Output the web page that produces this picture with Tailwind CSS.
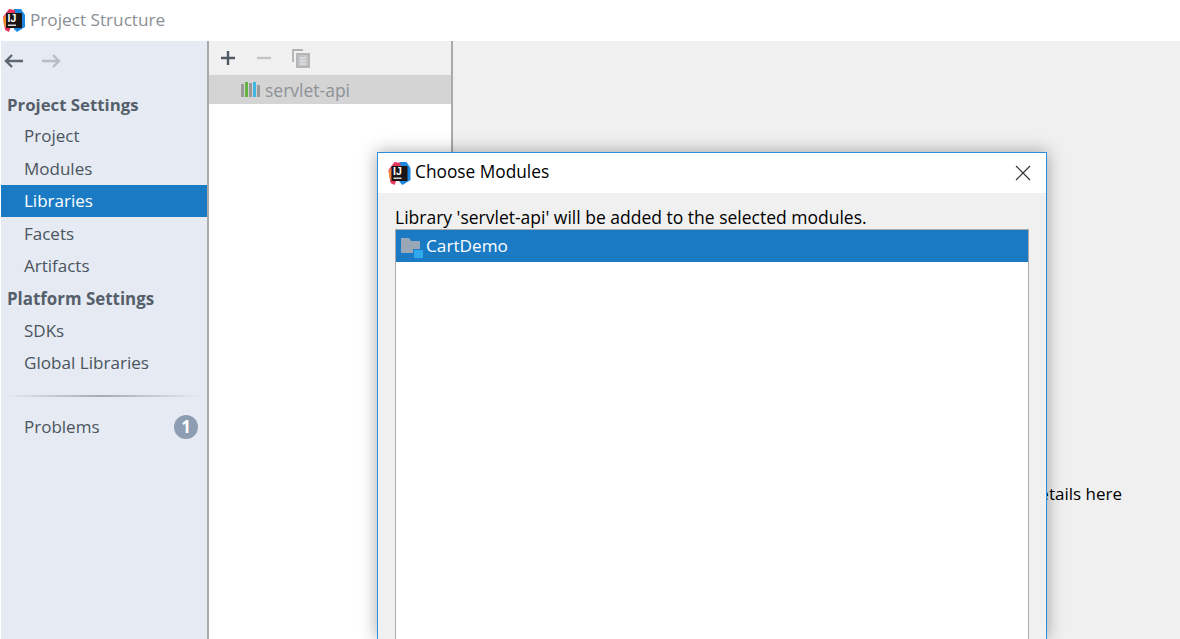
<!DOCTYPE html>
<html lang="en">
<head>
    <meta charset="UTF-8" />
    <title>Project Structure</title>
    <script src="https://cdn.jsdelivr.net/npm/@tailwindcss/browser@4"></script>
</head>
<body class="w-[1180px] h-[639px] overflow-hidden relative bg-white font-['Open_Sans','Noto_Sans',sans-serif] text-[17px]">
    <!-- title bar -->
    <div class="h-[41px] flex items-center pl-[3px] gap-[5px] bg-white">
        <svg width="22" height="23" viewBox="0 0 22 23">
            <path d="M11 0 L18 0 L22 6 L22 18 L14 23 L11 20 Z" fill="#1b87e0" />
            <path d="M0 8 L6 0 L12 1 L12 8 L6 23 L2 21 Z" fill="#e8375f" />
            <path d="M0 9 L3 6 L3 19 L1 16 Z" fill="#f58a2c" />
            <rect x="3" y="4" width="16" height="15" fill="#1a1414" />
            <text x="4.5" y="12.5" font-size="10.5" font-weight="700" fill="#fff" font-family="Liberation Sans">IJ</text>
            <rect x="5" y="15.5" width="8" height="1.5" fill="#d8d8d8" />
        </svg>
        <span class="text-[#8a8f96] text-[17.2px] -mt-[2px]">Project Structure</span>
    </div>

    <div class="flex h-[598px]">
        <!-- sidebar -->
        <div class="w-[209px] shrink-0 bg-[#e6eaf2] border-l border-white border-r-2 border-r-[#a9a9a9] text-[#4a5560]">
            <div class="h-[40px] flex items-center pl-[3px] gap-[17px]">
                <svg width="20" height="14" viewBox="0 0 20 14" fill="none" stroke="#5f6770" stroke-width="2.4"><path d="M19 7H2M8 1L2 7l6 6" /></svg>
                <svg width="20" height="14" viewBox="0 0 20 14" fill="none" stroke="#b9bcc0" stroke-width="2.4"><path d="M1 7h17M12 1l6 6-6 6" /></svg>
            </div>
            <div class="h-[39px] pt-[11px] pl-[6px] font-bold text-[#555f6b] leading-[26px] text-[16.8px]">Project Settings</div>
            <div class="h-[32px] flex items-center pl-[23px]">Project</div>
            <div class="h-[33px] flex items-center pl-[23px]">Modules</div>
            <div class="h-[32px] flex items-center pl-[23px] bg-[#1a7bc4] text-white">Libraries</div>
            <div class="h-[33px] flex items-center pl-[23px]">Facets</div>
            <div class="h-[32px] flex items-center pl-[23px]">Artifacts</div>
            <div class="h-[33px] flex items-center pl-[6px] font-bold text-[#555f6b] text-[16.9px]">Platform Settings</div>
            <div class="h-[31px] flex items-center pl-[23px]">SDKs</div>
            <div class="h-[33px] flex items-center pl-[23px] text-[17.1px]">Global Libraries</div>
            <div class="h-[2px] mt-[16px] ml-[3px] mr-[6px] bg-gradient-to-r from-[#e6eaf2] via-[#a8abae] to-[#e6eaf2]"></div>
            <div class="h-[32px] mt-[14px] flex items-center justify-between pl-[23px] pr-[9px]">
                <span>Problems</span>
                <span class="w-[24px] h-[24px] rounded-full bg-[#8d9db2] text-white font-bold text-[17px] flex items-center justify-center">1</span>
            </div>
        </div>

        <!-- library list -->
        <div class="w-[244px] shrink-0 bg-white border-r-2 border-[#a9a9a9]">
            <div class="h-[34px] bg-[#f0f0f0] flex items-center pl-[11px] gap-[20px]">
                <svg width="16" height="16" viewBox="0 0 16 16" stroke="#4f5963" stroke-width="2.4"><path d="M8 1v14M1 8h14" /></svg>
                <svg width="16" height="16" viewBox="0 0 16 16" stroke="#c3c5c7" stroke-width="2.4"><path d="M1 8h14" /></svg>
                <svg width="18" height="19" viewBox="0 0 18 19" fill="none" stroke="#b0b2b4" stroke-width="1.8">
                    <path d="M1 13V1h10" />
                    <rect x="5" y="5" width="12" height="13" fill="#c4c5c6" stroke="#b0b2b4" />
                    <path d="M8 9h6M8 12h6M8 15h6" stroke="#f0f0f0" stroke-width="1.2" />
                </svg>
            </div>
            <div class="h-[29px] bg-[#d4d4d4] flex items-center pl-[32px] gap-[4px] text-[#8d9299] text-[17.5px]">
                <svg width="20" height="17" viewBox="0 0 20 17">
                    <rect x="0" y="3" width="3" height="13" fill="#9a9a9a" />
                    <rect x="4" y="1" width="3" height="15" fill="#62b543" />
                    <rect x="8" y="2" width="3" height="14" fill="#9a9a9a" />
                    <rect x="12" y="1" width="3" height="15" fill="#40b6e0" />
                    <rect x="16" y="4" width="3" height="12" fill="#9a9a9a" />
                </svg>
                <span class="mt-[2px]">servlet-api</span>
            </div>
        </div>

        <!-- detail panel -->
        <div class="flex-1 bg-[#f0f0f0] flex justify-end pr-[58px] pt-[439px] text-black">
            <span class="leading-[27px]">Select a library to view or edit its details here</span>
        </div>
    </div>

    <!-- Choose Modules dialog -->
    <div class="absolute left-[377px] top-[152px] w-[670px] h-[487px] overflow-hidden bg-[#f0f0f0] border-x border-t border-[#2b8fe0] shadow-[0_0_16px_rgba(0,0,0,0.35)]">
        <div class="h-[40px] bg-white flex items-center pl-[10px] gap-[4px] text-black">
            <svg width="23" height="23" viewBox="0 0 22 23">
                <path d="M11 0 L18 0 L22 6 L22 18 L14 23 L11 20 Z" fill="#1b87e0" />
                <path d="M0 8 L6 0 L12 1 L12 8 L6 23 L2 21 Z" fill="#e8375f" />
                <path d="M0 9 L3 6 L3 19 L1 16 Z" fill="#f58a2c" />
                <rect x="3" y="4" width="16" height="15" fill="#1a1414" />
                <text x="4.5" y="12.5" font-size="10.5" font-weight="700" fill="#fff" font-family="Liberation Sans">IJ</text>
                <rect x="5" y="15.5" width="8" height="1.5" fill="#d8d8d8" />
            </svg>
            <span class="text-[17.3px] -mt-[2px]">Choose Modules</span>
            <svg class="ml-auto mr-[15px]" width="16" height="16" viewBox="0 0 16 16" stroke="#333" stroke-width="1.2"><path d="M1 1l14 14M15 1L1 15" /></svg>
        </div>
        <div class="px-[17px] pt-[12px]">
            <div class="h-[24px] leading-[24px] text-black text-[17.5px]">Library 'servlet-api' will be added to the selected modules.</div>
            <div class="h-[420px] w-[634px] bg-white border border-[#a9a9a9]">
                <div class="h-[32px] bg-[#1a7bc4] flex items-center pl-[5px] gap-[3px] text-white">
                    <svg class="mt-[4px]" width="22" height="20" viewBox="0 0 22 20">
                        <path d="M0 0h8l2 3h9v12H0z" fill="#9aa7b7" />
                        <rect x="12" y="11" width="10" height="9" fill="#1a7bc4" />
                        <rect x="13" y="12" width="9" height="8" fill="#2fa8ec" />
                    </svg>
                    <span class="text-[17.2px]">CartDemo</span>
                </div>
            </div>
        </div>
    </div>
</body>
</html>
